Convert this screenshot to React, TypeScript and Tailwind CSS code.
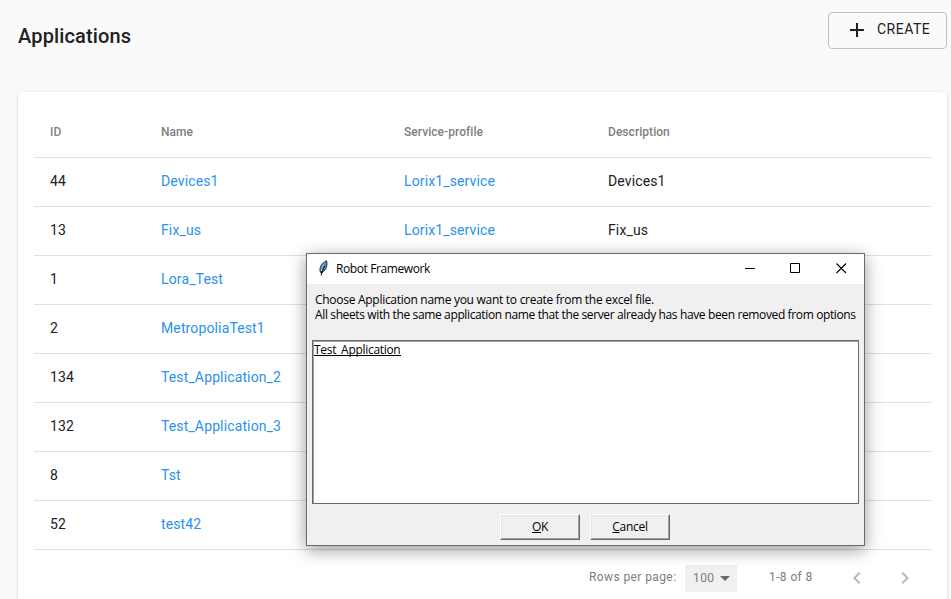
import type { ReactNode } from "react";

type Application = { id: number; name: string; profile: string; description: string };

const applications: Application[] = [
  { id: 44, name: "Devices1", profile: "Lorix1_service", description: "Devices1" },
  { id: 13, name: "Fix_us", profile: "Lorix1_service", description: "Fix_us" },
  { id: 1, name: "Lora_Test", profile: "", description: "" },
  { id: 2, name: "MetropoliaTest1", profile: "", description: "" },
  { id: 134, name: "Test_Application_2", profile: "", description: "" },
  { id: 132, name: "Test_Application_3", profile: "", description: "" },
  { id: 8, name: "Tst", profile: "", description: "" },
  { id: 52, name: "test42", profile: "", description: "" },
];

const columns = "grid grid-cols-[111px_243px_204px_1fr] items-center border-b border-[#e0e0e0] pl-4";

function FeatherIcon() {
  return (
    <svg width="10" height="17" viewBox="0 0 10 17" className="-mt-px block">
      <path d="M8.6 0.8 C9.4 3.5 8.8 7.5 7.4 9.6 L4.8 12 L2.2 11.8 C1 8 3.8 2.8 8.6 0.8Z" fill="#4a83c8" stroke="#2a2f38" strokeWidth="1" />
      <path d="M6.4 3.4 C4.4 5.8 3.4 8.4 3.2 11" fill="none" stroke="#a9c9ea" strokeWidth="1" />
      <path d="M6.6 6 C4.8 9 3.8 12 3.2 15.5" fill="none" stroke="#111111" strokeWidth="1" />
      <path d="M2.4 12.4H4.6" fill="none" stroke="#111111" strokeWidth="1.4" />
    </svg>
  );
}

function Heading() {
  return (
    <header className="flex h-[92px] items-start justify-between pl-[18px] pr-1 pt-3">
      <h1 className="pt-[9px] text-[20px] font-medium leading-[30px] tracking-[0.15px]">Applications</h1>
      <button className="flex h-[37px] w-[119px] items-center rounded border border-[#c1c1c1] pl-[18px]">
        <svg width="20" height="20" viewBox="0 0 20 20" className="-mt-px block">
          <path d="M3 10H17M10 3V17" stroke="#212121" strokeWidth="2" />
        </svg>
        <span className="-mt-[3px] ml-[10px] text-[14px] leading-[22px] tracking-[0.5px]">CREATE</span>
      </button>
    </header>
  );
}

function Pagination() {
  return (
    <div className="flex h-[54px] items-center pl-[555px] text-[12px] tracking-[0.4px] text-[#7d7d7d]">
      <span className="w-[96px]">Rows per page:</span>
      <div className="mt-[2px] flex h-[27px] w-[52px] items-center bg-[#f0f0f0] pl-2">
        <span>100</span>
        <svg width="10" height="5" viewBox="0 0 10 5" className="ml-[6px] block">
          <path d="M0 0H10L5 5Z" fill="#6b6b6b" />
        </svg>
      </div>
      <span className="ml-8">1-8 of 8</span>
      <svg width="8" height="12" viewBox="0 0 8 12" className="ml-10 mt-[2px] block">
        <path d="M6.7 0.7L1.4 6L6.7 11.3" fill="none" stroke="#b9b9b9" strokeWidth="2" />
      </svg>
      <svg width="8" height="12" viewBox="0 0 8 12" className="ml-10 mt-[2px] block">
        <path d="M1.3 0.7L6.6 6L1.3 11.3" fill="none" stroke="#b9b9b9" strokeWidth="2" />
      </svg>
    </div>
  );
}

function ApplicationsTable() {
  return (
    <main className="ml-[18px] h-[540px] w-[929px] rounded bg-white px-4 pt-4 shadow-[0_1px_3px_rgba(0,0,0,0.2)]">
      <div className={`${columns} h-[50px] pb-[2px] text-[12px] font-medium tracking-[0.05px] text-[#808080]`}>
        <span>ID</span>
        <span>Name</span>
        <span>Service-profile</span>
        <span>Description</span>
      </div>
      {applications.map((app) => (
        <div key={app.id} className={`${columns} h-[49px] pb-[2px] text-[14px] tracking-[0.13px]`}>
          <span>{app.id}</span>
          <a className="text-[#2a91ee]">{app.name}</a>
          <a className="text-[#2a91ee]">{app.profile}</a>
          <span>{app.description}</span>
        </div>
      ))}
      <Pagination />
    </main>
  );
}

function DialogButton({ children }: { children: ReactNode }) {
  return (
    <button className="h-[26px] w-[80px] border border-b-[#696969] border-l-white border-r-[#696969] border-t-white">
      <span className="flex h-full items-center justify-center border border-b-[#a0a0a0] border-l-[#e3e3e3] border-r-[#a0a0a0] border-t-[#e3e3e3]">
        <span>{children}</span>
      </span>
    </button>
  );
}

function RobotDialog() {
  return (
    <section className="absolute left-[306px] top-[253px] h-[293px] w-[559px] border border-[#6b6b6b] bg-[#f0f0f0] font-['Open_Sans','Noto_Sans',sans-serif] text-[12px] tracking-[-0.3px] text-black shadow-[0_4px_16px_rgba(0,0,0,0.4)]">
      <div className="flex h-[30px] items-center bg-white pl-[11px]">
        <FeatherIcon />
        <span className="ml-2 w-[409px] tracking-[-0.4px]">Robot Framework</span>
        <svg width="102" height="11" viewBox="0 0 102 11" className="-mt-px block" fill="none" stroke="#000000">
          <path d="M0 5.5H10" />
          <path d="M45.5 0.5H54.5V9.5H45.5Z" />
          <path d="M91.5 0.5L101 10M101 0.5L91.5 10" strokeWidth="1.1" />
        </svg>
      </div>
      <div className="h-[56px] whitespace-nowrap pl-2 pt-2 leading-[15px]">
        <p className="h-[15px] tracking-[-0.28px]">Choose Application name you want to create from the excel file.</p>
        <p className="h-[15px] tracking-[-0.37px]">
          All sheets with the same application name that the server already has have been removed from options
        </p>
      </div>
      <div className="ml-[5px] h-[164px] w-[547px] border border-[#696969] bg-white">
        <div className="h-full border-l border-t border-[#a0a0a0]">
          <span className="block h-[14px] w-[87px] whitespace-nowrap border-b border-black leading-[16px]">Test_Application</span>
        </div>
      </div>
      <div className="ml-[193px] mt-[10px] flex gap-[10px]">
        <DialogButton><u>O</u>K</DialogButton>
        <DialogButton><u>C</u>ancel</DialogButton>
      </div>
    </section>
  );
}

export default function App() {
  return (
    <div className="relative h-[599px] w-[951px] overflow-hidden bg-[#fafafa] font-['Roboto',sans-serif] text-[#212121]">
      <Heading />
      <ApplicationsTable />
      <RobotDialog />
    </div>
  );
}
